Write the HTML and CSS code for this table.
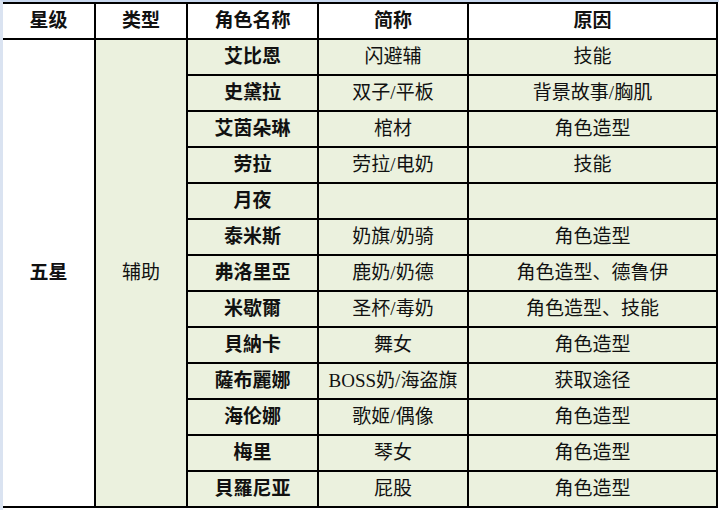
FILE: index.html
```html
<!DOCTYPE html>
<html lang="zh">
<head>
<meta charset="utf-8">
<link rel="stylesheet" href="styles.css">
</head>
<body>
<div class="sheet">
<table class="grid">
<colgroup>
<col class="c1"><col class="c2"><col class="c3"><col class="c4"><col class="c5">
</colgroup>
<thead>
<tr><th class="first">星级</th><th>类型</th><th>角色名称</th><th>简称</th><th>原因</th></tr>
</thead>
<tbody>
<tr><td class="first star" rowspan="13">五星</td><td class="type" rowspan="13">辅助</td><td class="name">艾比恩</td><td>闪避辅</td><td>技能</td></tr>
<tr><td class="name">史黛拉</td><td>双子/平板</td><td>背景故事/胸肌</td></tr>
<tr><td class="name">艾茵朵琳</td><td>棺材</td><td>角色造型</td></tr>
<tr><td class="name">劳拉</td><td>劳拉/电奶</td><td>技能</td></tr>
<tr><td class="name">月夜</td><td></td><td></td></tr>
<tr><td class="name">泰米斯</td><td>奶旗/奶骑</td><td>角色造型</td></tr>
<tr><td class="name">弗洛里亞</td><td>鹿奶/奶德</td><td>角色造型、德鲁伊</td></tr>
<tr><td class="name">米歇爾</td><td>圣杯/毒奶</td><td>角色造型、技能</td></tr>
<tr><td class="name">貝納卡</td><td>舞女</td><td>角色造型</td></tr>
<tr><td class="name">薩布麗娜</td><td>BOSS奶/海盗旗</td><td>获取途径</td></tr>
<tr><td class="name">海伦娜</td><td>歌姬/偶像</td><td>角色造型</td></tr>
<tr><td class="name">梅里</td><td>琴女</td><td>角色造型</td></tr>
<tr><td class="name">貝羅尼亚</td><td>屁股</td><td>角色造型</td></tr>
</tbody>
</table>
</div>
</body>
</html>
```

FILE: styles.css
```css
html, body {
  margin: 0;
  padding: 0;
  background: #ffffff;
}
body {
  width: 719px;
  height: 510px;
  overflow: hidden;
  font-family: "Liberation Serif", "Noto Sans CJK SC", serif;
  color: #111;
}
.sheet {
  border-top: 2px solid #c9d8ee;
  border-left: 3px solid #dae3f1;
  height: 508px;
}
.grid {
  border-collapse: collapse;
  table-layout: fixed;
  width: 714px;
}
.c1 { width: 92px; }
.c2 { width: 92px; }
.c3 { width: 131px; }
.c4 { width: 150px; }
.c5 { width: 249px; }
.grid th, .grid td {
  border: 2px solid #000;
  height: 34px;
  padding: 0;
  text-align: center;
  vertical-align: middle;
  font-size: 19px;
  line-height: 20px;
  background: #ebf1de;
  font-weight: normal;
  white-space: nowrap;
}
.grid th {
  background: #ffffff;
  font-weight: bold;
  height: 34px;
}
.grid .first {
  border-left: none;
}
.grid td.star {
  background: #ffffff;
  font-weight: bold;
}
.grid td.name {
  font-weight: bold;
}
```
